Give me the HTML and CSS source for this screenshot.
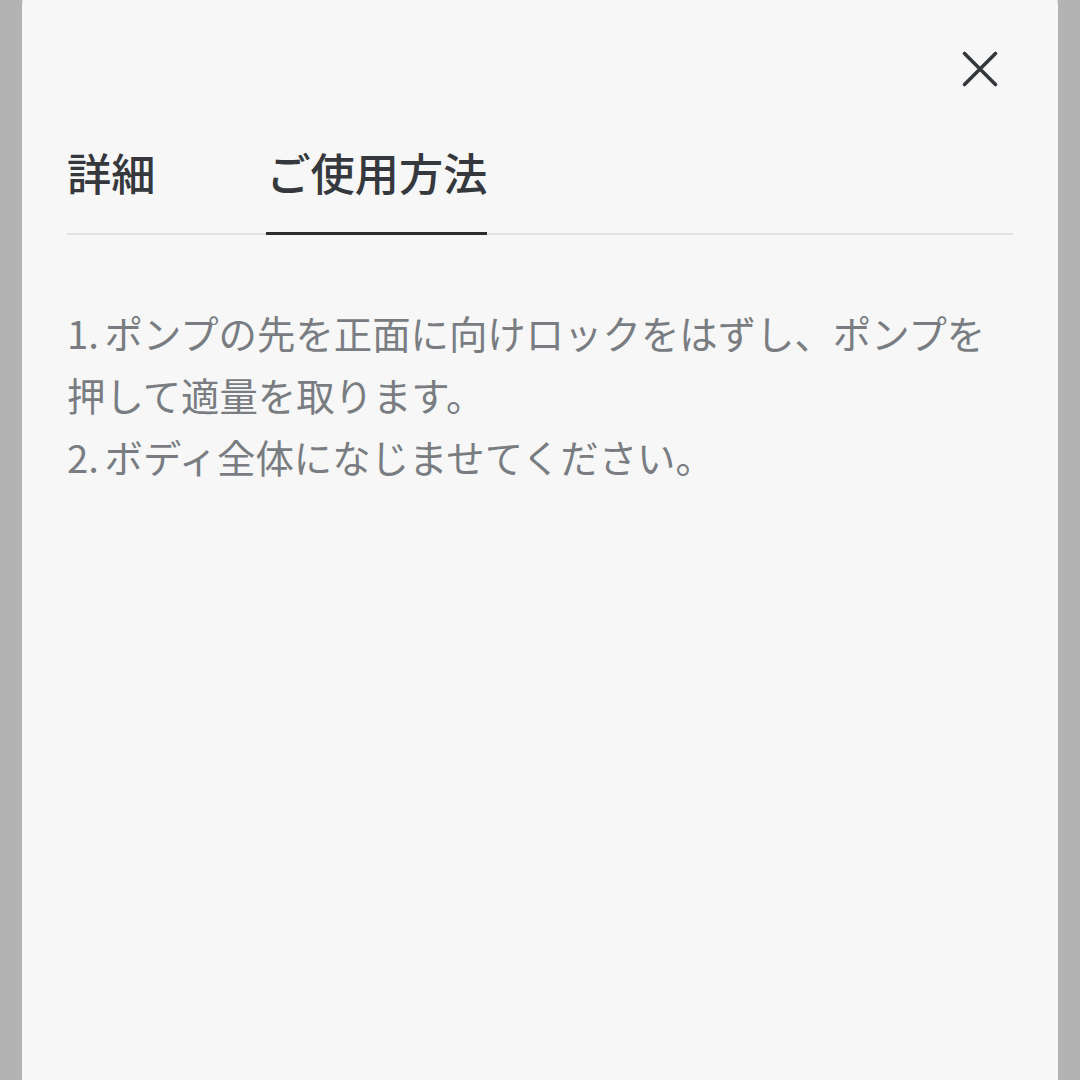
FILE: index.html
```html
<!DOCTYPE html>
<html lang="ja">
<head>
<meta charset="utf-8">
<title>ご使用方法</title>
<link rel="stylesheet" href="styles.css">
</head>
<body>
<div class="sheet">
  <div class="top-bar">
    <button class="close" aria-label="閉じる">
      <svg viewBox="0 0 40 40" width="40" height="40">
        <path d="M4.5 4.5 L35.5 35.5 M35.5 4.5 L4.5 35.5" stroke="#34373c" stroke-width="3.6" stroke-linecap="round" fill="none"/>
      </svg>
    </button>
  </div>
  <div class="tabs">
    <div class="tab">詳細</div>
    <div class="tab active">ご使用方法</div>
  </div>
  <div class="content">
    <p>1. ポンプの先を正面に向けロックをはずし、ポンプを押して適量を取ります。</p>
    <p>2. ボディ全体になじませてください。</p>
  </div>
</div>
</body>
</html>
```
FILE: styles.css
```css
* { box-sizing: border-box; }
html, body { margin: 0; padding: 0; }
body {
  background: #b3b3b3;
  font-family: "Noto Sans CJK JP", "Noto Sans", sans-serif;
  width: 1080px;
  height: 1080px;
  overflow: hidden;
}
.sheet {
  margin: -20px 22px 0;
  padding: 20px 45px 0;
  background: #f7f7f7;
  border-radius: 26px 26px 0 0;
  min-height: 1140px;
}
.top-bar {
  display: flex;
  justify-content: flex-end;
}
.close {
  width: 40px;
  height: 40px;
  margin: 49px 13px 0 0;
  padding: 0;
  border: none;
  background: transparent;
  display: flex;
}
.tabs {
  display: flex;
  margin-top: 53px;
  border-bottom: 2px solid #e3e3e3;
}
.tab {
  font-size: 44.2px;
  line-height: 60px;
  font-weight: 500;
  color: #35383c;
  padding-bottom: 30px;
  margin-bottom: -2px;
  border-bottom: 3px solid transparent;
  margin-right: 111px;
}
.tab.active {
  border-bottom-color: #2b2d30;
}
.content {
  margin-top: 66px;
  font-size: 38.4px;
  line-height: 62px;
  color: #797d82;
  word-spacing: -3px;
}
.content p { margin: 0; }
```
